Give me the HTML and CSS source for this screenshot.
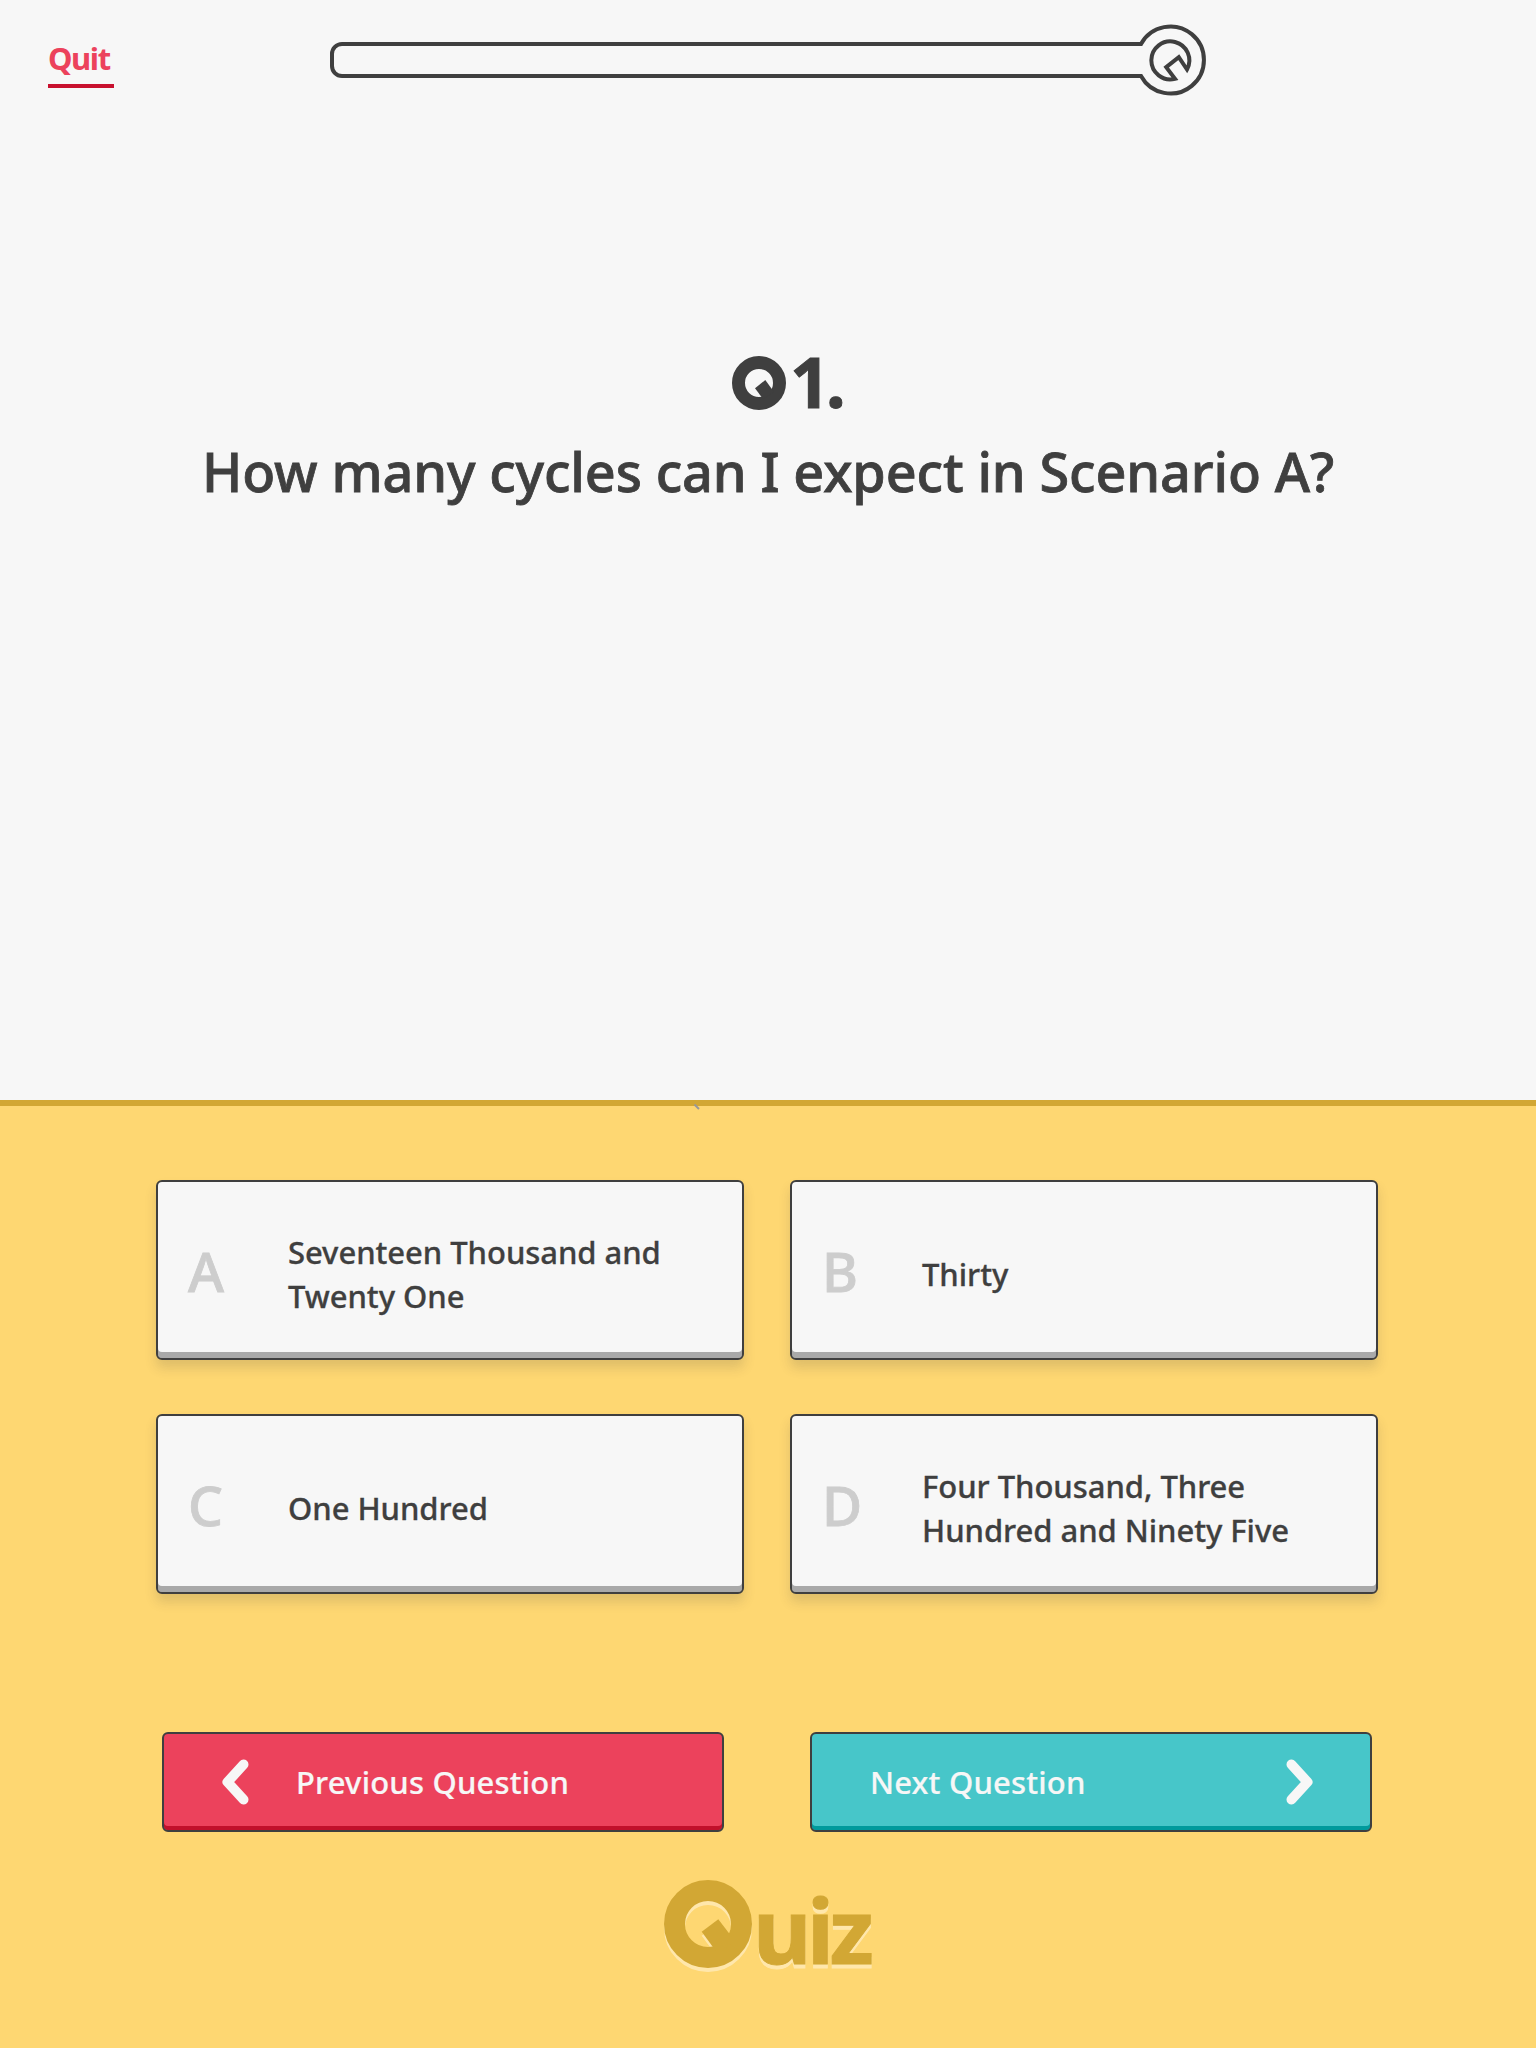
FILE: index.html
```html
<!DOCTYPE html>
<html lang="en">
<head>
<meta charset="utf-8">
<title>Quiz</title>
<link rel="stylesheet" href="styles.css">
</head>
<body>
<main class="screen">
  <section class="question">
    <header class="topbar">
      <a class="quit">Quit</a>
      <svg class="progress" width="878" height="74" viewBox="0 0 878 74" fill="none" stroke="#3f3f3f" stroke-width="4">
        <path d="M812.500 21H12A10 10 0 0 0 2 31V43A10 10 0 0 0 12 53H811A33.500 33.500 0 1 0 811 21"/>
        <path d="M857 46.500A19 19 0 1 0 845 55.800L836.200 44.200L848.800 34.200Z"/>
      </svg>
    </header>
    <div class="number">
      <svg width="54" height="54" viewBox="0 0 54 54"><circle cx="27" cy="27" r="20.5" fill="none" stroke="#3f3f3f" stroke-width="13"/><path d="M33.3 24L23 32.3L31 43L42 36Z" fill="#3f3f3f"/></svg>
      <span>1.</span>
    </div>
    <h1 class="title">How many cycles can I expect in Scenario A?</h1>
  </section>
  <section class="panel">
    <svg class="tick" width="6" height="6" viewBox="0 0 6 6"><path d="M.5 .5L5 5" stroke="#999" stroke-width="2"/></svg>
    <div class="answers">
      <button class="card"><b>A</b><span class="label">Seventeen Thousand and<br>Twenty One</span></button>
      <button class="card"><b>B</b><span class="label">Thirty</span></button>
      <button class="card"><b>C</b><span class="label">One Hundred</span></button>
      <button class="card"><b>D</b><span class="label">Four Thousand, Three<br>Hundred and Ninety Five</span></button>
    </div>
    <nav class="nav">
      <button class="btn prev"><svg width="28" height="46" viewBox="0 0 28 46"><path d="M21.500 5.500L5.500 23L21.500 40.500"/></svg><span>Previous Question</span></button>
      <button class="btn next"><span>Next Question</span><svg width="28" height="46" viewBox="0 0 28 46"><path d="M6.500 5.500L22.500 23L6.500 40.500"/></svg></button>
    </nav>
    <footer class="logo">
      <svg width="88" height="88" viewBox="0 0 88 88"><circle cx="44" cy="44" r="33.500" fill="none" stroke="#d2a734" stroke-width="21"/><path d="M54.300 39.300L37.700 51.700L54 74L71 61Z" fill="#d2a734"/></svg>
      <span>uiz</span>
    </footer>
  </section>
</main>
</body>
</html>
```
FILE: styles.css
```css
* { box-sizing: border-box; }
body {
  margin: 0;
  font-family: "Noto Sans", "Open Sans", sans-serif;
  color: #3f3f3f;
  background: #fed772;
}
.screen { width: 1536px; height: 2048px; display: flex; flex-direction: column; overflow: hidden; }
.question { height: 1100px; background: #f7f7f7; }
.topbar { display: flex; align-items: flex-start; padding: 23px 0 0 48px; gap: 216px; }
.quit { width: 66px; height: 65px; padding-top: 13px; border-bottom: 4px solid #c8102e; color: #ec425c; font-size: 31px; line-height: 44px; font-weight: 700; letter-spacing: -1.4px; white-space: nowrap; }
.progress { display: block; }
.number { display: flex; align-items: center; gap: 4px; height: 54px; margin-top: 259px; padding-left: 732px; font-size: 70px; line-height: 54px; font-weight: 700; letter-spacing: -4px; }
.number span { padding-bottom: 5px; -webkit-text-stroke: 1px #3f3f3f; }
.title { margin: 23px 0 0; text-align: center; font-size: 54px; line-height: 76px; font-weight: 500; letter-spacing: -.13px; -webkit-text-stroke: .8px #3f3f3f; white-space: nowrap; }
.panel { position: relative; height: 948px; border-top: 6px solid #d2a734; }
.tick { position: absolute; left: 694px; top: -2px; }
.answers { display: grid; grid-template-columns: 588px 588px; grid-auto-rows: 180px; gap: 54px 46px; padding: 74px 0 0 156px; }
button { font-family: inherit; color: inherit; text-align: left; margin: 0; }
.card { display: flex; align-items: center; padding: 8px 0 0 30px; border: 2px solid #3f3f3f; border-radius: 6px; background: #f7f7f7; box-shadow: inset 0 -6px #a9a9a9, 0 8px 12px rgba(63,63,63,.16); font-size: 31px; line-height: 44px; font-weight: 500; letter-spacing: -.05px; }
.card b { width: 100px; padding-bottom: 7px; font-size: 55px; font-weight: 500; color: #cdcdcd; -webkit-text-stroke: .8px #cdcdcd; }
.label { white-space: nowrap; -webkit-text-stroke: .3px #3f3f3f; }
.nav { display: flex; gap: 86px; padding: 138px 0 0 162px; }
.btn { display: flex; align-items: center; width: 562px; height: 100px; padding: 0 57px 0 58px; border: 2px solid #3f3f3f; border-radius: 6px; color: #f7f7f7; font-size: 31px; font-weight: 500; letter-spacing: .18px; -webkit-text-stroke: .2px #f7f7f7; }
.btn path { fill: none; stroke: #f7f7f7; stroke-width: 10; stroke-linecap: round; stroke-linejoin: round; }
.prev { gap: 46px; background: #ec425c; box-shadow: inset 0 -4px #c1102b; }
.next { justify-content: space-between; background: #47c6c9; box-shadow: inset 0 -4px #009a9c; }
.logo { display: flex; align-items: flex-start; gap: 1px; height: 88px; margin: 48px 0 0 664px; color: #d2a734; font-size: 90px; line-height: 98px; font-weight: 700; letter-spacing: -4.5px; -webkit-text-stroke: 1px #d2a734; filter: drop-shadow(0 4px 0 #ffe7ac); }
```
